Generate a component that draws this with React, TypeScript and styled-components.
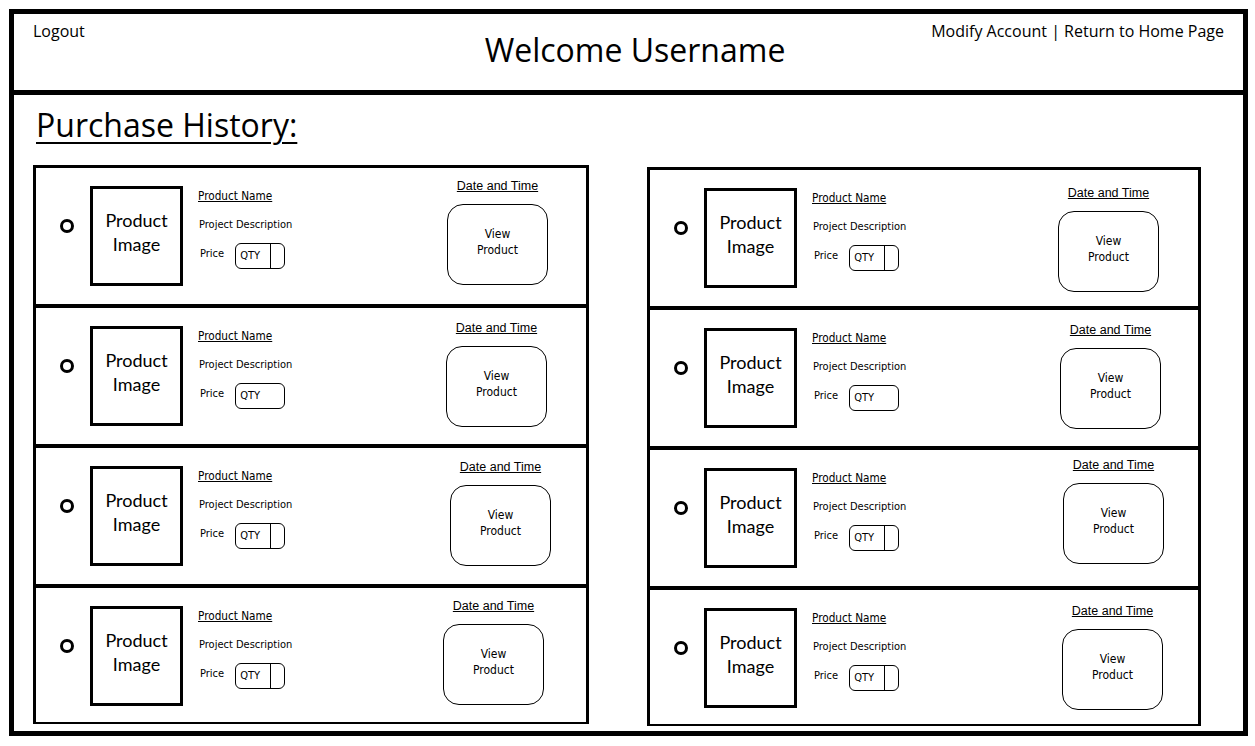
import styled, { createGlobalStyle } from 'styled-components'

const GlobalStyle = createGlobalStyle`
  body {
    margin: 0;
    background: #fff;
    color: #000;
    font-family: 'Open Sans', 'Noto Sans', sans-serif;
  }
`

const narrow = `'DejaVu Sans Condensed', 'Liberation Sans', sans-serif`

const Frame = styled.div`
  box-sizing: border-box;
  width: 1239px;
  height: 727px;
  margin: 9px 0 0 9px;
  border: 5px solid #000;
  display: flex;
  flex-direction: column;
`
const Header = styled.header`
  box-sizing: border-box;
  height: 81px;
  padding: 6px 19px 0;
  border-bottom: 5px solid #000;
  display: grid;
  grid-template-columns: 1fr auto 1fr;
  align-items: start;
`
const NavLink = styled.a<{ $right?: boolean }>`
  justify-self: ${props => (props.$right ? 'end' : 'start')};
  color: #000;
  font-size: 16px;
  line-height: 22px;
  text-decoration: none;
  cursor: pointer;
`
const Welcome = styled.h1`
  margin: 8px 0 0 13px;
  font-size: 32px;
  font-weight: 400;
  line-height: 44px;
`
const Main = styled.main`
  padding-left: 19px;
`
const Title = styled.h2`
  margin: 8px 0 18px 3px;
  font-size: 32px;
  font-weight: 400;
  line-height: 44px;
  text-decoration: underline;
  text-decoration-thickness: 2px;
  text-underline-offset: 5px;
`
const Columns = styled.div`
  display: grid;
  grid-template-columns: 556px 554px;
  column-gap: 58px;
  align-items: start;
`
const Panel = styled.section<{ $offset: number }>`
  box-sizing: border-box;
  margin-top: ${props => props.$offset}px;
  border: 3px solid #000;
  border-bottom-width: 2px;
`
const Row = styled.div`
  box-sizing: border-box;
  height: 140px;
  padding: 10px 0 0 24px;
  border-bottom: 4px solid #000;
  display: flex;
  align-items: flex-start;
  &:last-child {
    height: 134px;
    border-bottom: none;
  }
`
const Radio = styled.span`
  box-sizing: border-box;
  width: 14px;
  height: 14px;
  margin-top: 41px;
  border: 3px solid #000;
  border-radius: 50%;
  flex-shrink: 0;
`
const ImageBox = styled.div`
  box-sizing: border-box;
  width: 93px;
  height: 100px;
  margin: 8px 0 0 16px;
  padding-bottom: 8px;
  border: 3px solid #000;
  display: flex;
  align-items: center;
  justify-content: center;
  text-align: center;
  font-family: Lato, sans-serif;
  font-size: 18px;
  line-height: 24px;
`
const Info = styled.div`
  margin: 10px 0 0 15px;
  display: flex;
  flex-direction: column;
  align-items: flex-start;
  font-family: ${narrow};
`
const ProductName = styled.a`
  color: #000;
  font-size: 11.7px;
  line-height: 16px;
  text-decoration: underline;
  text-underline-offset: 1px;
`
const Description = styled.div`
  margin: 13px 0 0 1px;
  font-size: 11px;
  line-height: 16px;
`
const PriceRow = styled.div`
  margin: 10px 0 0 2px;
  display: flex;
  gap: 11px;
`
const Price = styled.span`
  margin-top: 3px;
  font-size: 11px;
  line-height: 16px;
`
const QtyBox = styled.div`
  box-sizing: border-box;
  width: 50px;
  height: 26px;
  border: 1px solid #000;
  border-radius: 6px;
  display: flex;
`
const QtyLabel = styled.span<{ $divider: boolean }>`
  box-sizing: border-box;
  width: 35px;
  padding-left: 4px;
  border-right: ${props => (props.$divider ? '1px solid #000' : 'none')};
  font-size: 11px;
  line-height: 24px;
`
const Aside = styled.div<{ $dx: number; $dy: number }>`
  margin: ${props => props.$dy}px ${props => 38 - props.$dx}px 0 auto;
  display: flex;
  flex-direction: column;
  align-items: center;
`
const DateTime = styled.span`
  font-family: 'Liberation Sans', sans-serif;
  font-size: 12.5px;
  line-height: 16px;
  text-decoration: underline;
  text-underline-offset: 1px;
`
const ViewButton = styled.button`
  box-sizing: border-box;
  width: 101px;
  height: 81px;
  margin-top: 10px;
  padding: 0 0 6px;
  border: 1px solid #000;
  border-radius: 16px;
  background: #fff;
  color: #000;
  font-family: ${narrow};
  font-size: 12px;
  line-height: 16px;
  cursor: pointer;
`

type Purchase = { dx: number; dy: number; divider: boolean }

const columns: { offset: number; items: Purchase[] }[] = [
  {
    offset: 0,
    items: [
      { dx: 0, dy: 0, divider: true },
      { dx: -1, dy: 2, divider: false },
      { dx: 3, dy: 1, divider: true },
      { dx: -4, dy: 0, divider: true }
    ]
  },
  {
    offset: 2,
    items: [
      { dx: -1, dy: 5, divider: true },
      { dx: 1, dy: 2, divider: false },
      { dx: 4, dy: -3, divider: true },
      { dx: 3, dy: 3, divider: true }
    ]
  }
]

const PurchaseRow = ({ item }: { item: Purchase }) => (
  <Row>
    <Radio role="radio" aria-checked="false" />
    <ImageBox>
      Product
      <br />
      Image
    </ImageBox>
    <Info>
      <ProductName>Product Name</ProductName>
      <Description>Project Description</Description>
      <PriceRow>
        <Price>Price</Price>
        <QtyBox>
          <QtyLabel $divider={item.divider}>QTY</QtyLabel>
        </QtyBox>
      </PriceRow>
    </Info>
    <Aside $dx={item.dx} $dy={item.dy}>
      <DateTime>Date and Time</DateTime>
      <ViewButton>
        View
        <br />
        Product
      </ViewButton>
    </Aside>
  </Row>
)

const App = () => (
  <>
    <GlobalStyle />
    <Frame>
      <Header>
        <NavLink>Logout</NavLink>
        <Welcome>Welcome Username</Welcome>
        <NavLink $right>Modify Account | Return to Home Page</NavLink>
      </Header>
      <Main>
        <Title>Purchase History:</Title>
        <Columns>
          {columns.map((col, i) => (
            <Panel key={i} $offset={col.offset}>
              {col.items.map((item, j) => (
                <PurchaseRow key={j} item={item} />
              ))}
            </Panel>
          ))}
        </Columns>
      </Main>
    </Frame>
  </>
)

export default App
